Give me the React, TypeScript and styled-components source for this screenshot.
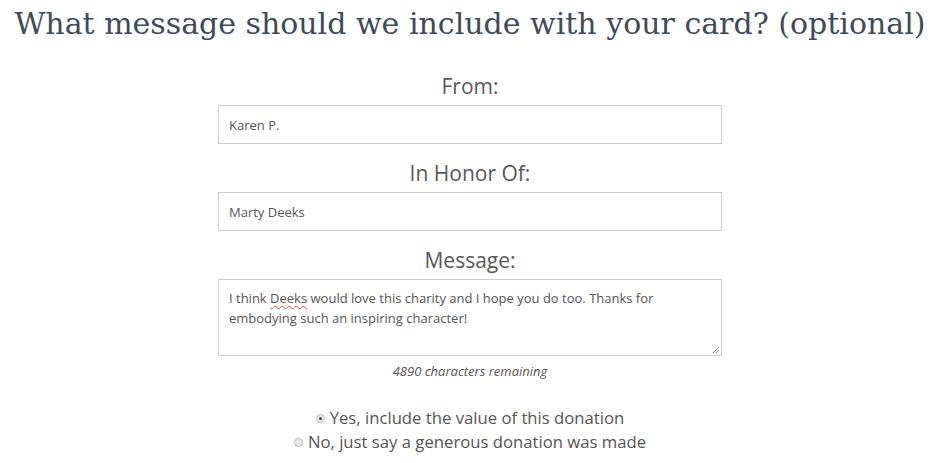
import React from "react";
import styled, { createGlobalStyle } from "styled-components";

const Global = createGlobalStyle`
  html, body { margin: 0; padding: 0; background: #fff; }
  body { font-family: "Open Sans", "Liberation Sans", sans-serif; color: #555; }
  * { box-sizing: border-box; }
`;

const Page = styled.div`
  width: 940px;
  display: flex;
  flex-direction: column;
  align-items: center;
`;

const Title = styled.h1`
  margin: 4px 0 0;
  font-family: "DejaVu Serif", "Liberation Serif", serif;
  font-weight: 400;
  font-size: 30px;
  line-height: 40px;
  color: #3f4b59;
  white-space: nowrap;
`;

const Form = styled.div`
  width: 504px;
  margin-top: 28px;
  display: flex;
  flex-direction: column;
`;

const Label = styled.div<{ $first?: boolean }>`
  font-size: 21px;
  line-height: 28px;
  text-align: center;
  color: #585858;
  margin-top: ${(p) => (p.$first ? "0" : "15px")};
  margin-bottom: 5px;
`;

const Input = styled.div`
  height: 39px;
  border: 1px solid #ccc;
  padding: 0 10px;
  display: flex;
  align-items: center;
  font-size: 13px;
  color: #555;
`;

const TextArea = styled.div`
  position: relative;
  height: 77px;
  border: 1px solid #ccc;
  padding: 8px 10px;
  font-size: 13px;
  line-height: 20px;
  color: #555;
`;

const Misspelled = styled.span`
  text-decoration: underline wavy #e04848;
  text-decoration-thickness: 1px;
  text-underline-offset: 2px;
`;

const Grip = styled.svg`
  position: absolute;
  right: 1px;
  bottom: 1px;
`;

const Counter = styled.div`
  margin-top: 6px;
  text-align: center;
  font-size: 13px;
  font-style: italic;
  line-height: 18px;
  color: #555;
`;

const Options = styled.div`
  margin-top: 26px;
  display: flex;
  flex-direction: column;
  align-items: center;
`;

const Option = styled.label`
  display: flex;
  align-items: center;
  gap: 5px;
  font-size: 16.7px;
  line-height: 24px;
  color: #555;
`;

const Radio = styled.span<{ $checked?: boolean }>`
  width: 9px;
  height: 9px;
  border-radius: 50%;
  border: 1px solid #bbb;
  background: ${(p) => (p.$checked ? "#eee" : "#e8e8e8")};
  display: inline-flex;
  align-items: center;
  justify-content: center;
  &::after {
    content: "";
    width: 3px;
    height: 3px;
    border-radius: 50%;
    background: ${(p) => (p.$checked ? "#444" : "transparent")};
  }
`;

export default function App() {
  return (
    <>
      <Global />
      <Page>
        <Title>What message should we include with your card? (optional)</Title>
        <Form>
          <Label $first>From:</Label>
          <Input>Karen P.</Input>
          <Label>In Honor Of:</Label>
          <Input>Marty Deeks</Input>
          <Label>Message:</Label>
          <TextArea>
            I think <Misspelled>Deeks</Misspelled> would love this charity and I hope you do too. Thanks for
            embodying such an inspiring character!
            <Grip width="8" height="8" viewBox="0 0 8 8">
              <path d="M7 1L1 7M7 4L4 7" stroke="#999" strokeWidth="1" />
            </Grip>
          </TextArea>
          <Counter>4890 characters remaining</Counter>
        </Form>
        <Options>
          <Option>
            <Radio $checked />
            Yes, include the value of this donation
          </Option>
          <Option>
            <Radio />
            No, just say a generous donation was made
          </Option>
        </Options>
      </Page>
    </>
  );
}
